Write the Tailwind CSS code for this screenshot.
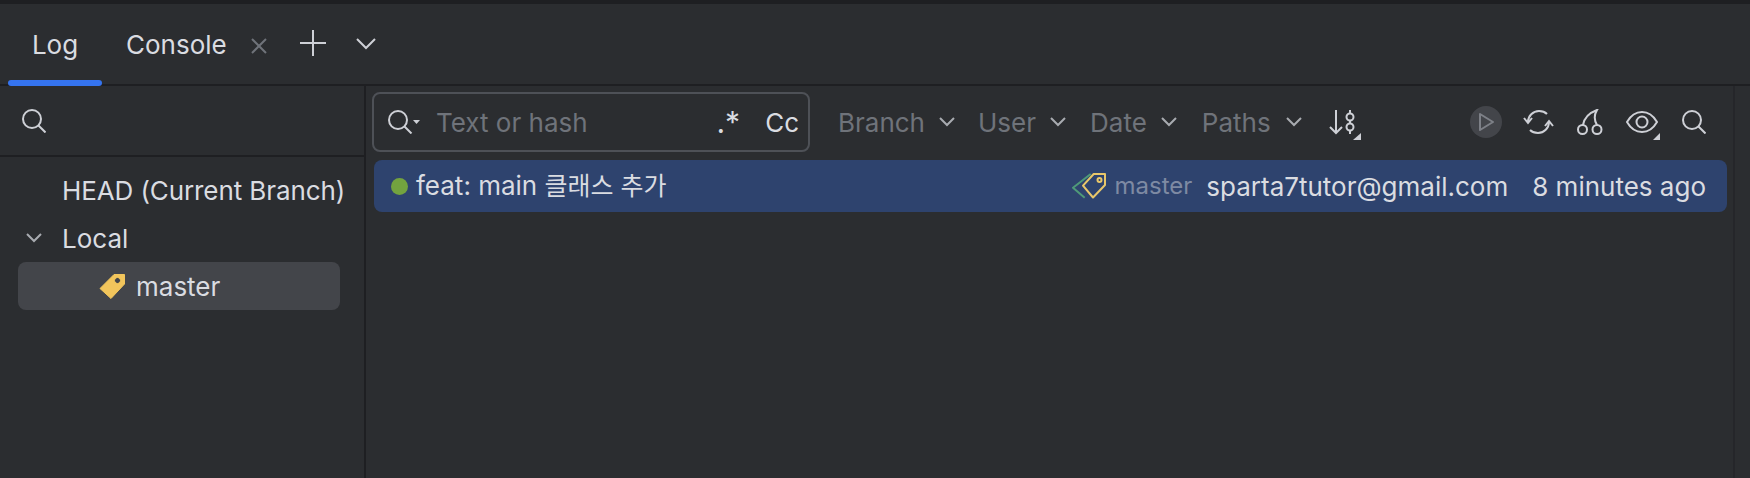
<!DOCTYPE html>
<html lang="en">
<head>
    <meta charset="UTF-8">
    <title>Git Log</title>
    <script src="https://cdn.jsdelivr.net/npm/@tailwindcss/browser@4"></script>
</head>
<body class="bg-[#2b2d30] h-[478px] w-[1750px] overflow-hidden flex flex-col font-['Inter','Noto_Sans_CJK_KR',sans-serif] text-[26px] text-[#dadce1]">
    <!-- Top strip -->
    <div class="h-1 bg-[#1e1f22] shrink-0"></div>

    <!-- Tabs -->
    <header class="h-[82px] shrink-0 flex items-stretch border-b-2 border-[#1e1f22] relative">
        <div class="w-[94px] ml-2 flex justify-center pt-[21px]">Log</div>
        <div class="ml-[24px] pt-[21px]">Console</div>
        <div class="ml-[24px] pt-[34px]">
            <svg width="16" height="16" viewBox="0 0 16 16" fill="none" stroke="#6f737a" stroke-width="2"><path d="M1 1l14 14M15 1L1 15"/></svg>
        </div>
        <div class="ml-[33px] pt-[26px]">
            <svg width="26" height="26" viewBox="0 0 26 26" fill="none" stroke="#ced0d6" stroke-width="2"><path d="M13 0v26M0 13h26"/></svg>
        </div>
        <div class="ml-[30px] pt-[34px]">
            <svg width="20" height="12" viewBox="0 0 20 12" fill="none" stroke="#ced0d6" stroke-width="2"><path d="M1 1l9 9 9-9"/></svg>
        </div>
        <div class="absolute left-2 bottom-[-2px] w-[94px] h-[6px] rounded-full bg-[#3574f0]"></div>
    </header>

    <div class="flex-1 flex min-h-0">
        <!-- Branch tree -->
        <aside class="w-[366px] shrink-0 border-r-2 border-[#1e1f22] flex flex-col">
            <div class="h-[71px] shrink-0 border-b-2 border-[#1e1f22] flex items-center pl-[22px]">
                <svg width="24" height="24" viewBox="0 0 24 24" fill="none" stroke="#ced0d6" stroke-width="2"><circle cx="10" cy="10" r="9"/><path d="M16.500 16.500l7 7"/></svg>
            </div>
            <div class="h-[66px] shrink-0 flex items-center pl-[62px] whitespace-nowrap tracking-[-0.1px]">HEAD (Current Branch)</div>
            <div class="h-[30px] shrink-0 flex items-center">
                <svg class="ml-[26px]" width="16" height="10" viewBox="0 0 16 10" fill="none" stroke="#a8abb0" stroke-width="2"><path d="M1 1l7 7 7-7"/></svg>
                <span class="ml-[20px]">Local</span>
            </div>
            <div class="h-[48px] mt-[9px] ml-[18px] w-[322px] rounded-lg bg-[#43454a] flex items-center pl-[81px]">
                <svg width="27" height="27" viewBox="0 0 27 27"><path fill-rule="evenodd" fill="#f2c55c" stroke="#f2c55c" stroke-linejoin="round" d="M15 1.500h10.500V11L12 25.500 1 15.500zM18.500 4.500a3 3 0 1 0 .01 0z"/></svg>
                <span class="ml-[10px]">master</span>
            </div>
        </aside>

        <main class="flex-1 flex flex-col min-w-0 mr-[15px] border-r-2 border-[#25262a]">
            <!-- Toolbar -->
            <div class="h-[72px] shrink-0 flex items-center pl-[6px]">
                <div class="w-[438px] h-[60px] rounded-lg border-2 border-[#4e5157] flex items-center pl-[14px] pr-[9px]">
                    <svg width="32" height="24" viewBox="0 0 32 24" fill="none" stroke="#ced0d6" stroke-width="2"><circle cx="10" cy="10" r="9"/><path d="M16.500 16.500l7 7"/><path d="M25 10h7l-3.500 4z" fill="#ced0d6" stroke="none"/></svg>
                    <span class="ml-[16px] text-[#6f737a]">Text or hash</span>
                    <span class="ml-auto text-[30px] leading-none">.*</span>
                    <span class="ml-[25px]">Cc</span>
                </div>
                <div class="ml-[28px] flex items-center text-[#6f737a]">
                    <span>Branch</span>
                    <svg class="ml-[14px]" width="16" height="10" viewBox="0 0 16 10" fill="none" stroke="#a8abb0" stroke-width="2"><path d="M1 1l7 7 7-7"/></svg>
                    <span class="ml-[23px]">User</span>
                    <svg class="ml-[14px]" width="16" height="10" viewBox="0 0 16 10" fill="none" stroke="#a8abb0" stroke-width="2"><path d="M1 1l7 7 7-7"/></svg>
                    <span class="ml-[24px]">Date</span>
                    <svg class="ml-[14px]" width="16" height="10" viewBox="0 0 16 10" fill="none" stroke="#a8abb0" stroke-width="2"><path d="M1 1l7 7 7-7"/></svg>
                    <span class="ml-[25px]">Paths</span>
                    <svg class="ml-[15px]" width="16" height="10" viewBox="0 0 16 10" fill="none" stroke="#a8abb0" stroke-width="2"><path d="M1 1l7 7 7-7"/></svg>
                </div>
                <svg class="ml-[27px] mt-[5px]" width="32" height="33" viewBox="0 0 32 33" fill="none" stroke="#ced0d6" stroke-width="2"><path d="M7 2v23M1 19l6 6 6-6"/><path d="M21 2v3.500M21 12.500v3M21 22.500V26"/><circle cx="21" cy="9" r="3.500"/><circle cx="21" cy="19" r="3.500"/><path d="M32 25v7h-8z" fill="#ced0d6" stroke="none"/></svg>
                <div class="ml-auto flex items-center pr-[27px]">
                    <div class="w-8 h-8 rounded-full bg-[#43454a] flex items-center justify-center">
                        <svg width="18" height="20" viewBox="0 0 18 20" fill="none" stroke="#7d8087" stroke-width="2" stroke-linejoin="round"><path d="M3 2l13 8-13 8z"/></svg>
                    </div>
                    <svg class="ml-[21px]" width="31" height="26" viewBox="0 0 31 26" fill="none" stroke="#ced0d6" stroke-width="2"><path d="M5 13c0-6 5-11 11-11 3 0 6 1 8 3M26 13c0 6-5 11-11 11-3 0-6-1-8-3"/><path d="M1 9l4 5 4-5M22 17l4-5 4 5"/></svg>
                    <svg class="ml-[23px]" width="26" height="26" viewBox="0 0 26 26" fill="none" stroke="#ced0d6" stroke-width="2"><circle cx="5.500" cy="20.500" r="4.500"/><circle cx="20" cy="20.500" r="4.500"/><path d="M6 16C7 10 12 4 20 1c-3 5-3 10 0 15"/></svg>
                    <svg class="ml-[23px] mt-[6px]" width="34" height="30" viewBox="0 0 34 30" fill="none" stroke="#ced0d6" stroke-width="2"><path d="M1 12C5 5 10 2 16 2s11 3 15 10c-4 7-9 10-15 10S5 19 1 12z"/><circle cx="16" cy="12" r="5.500"/><path d="M34 23v7h-7z" fill="#ced0d6" stroke="none"/></svg>
                    <svg class="ml-[22px]" width="24" height="24" viewBox="0 0 24 24" fill="none" stroke="#ced0d6" stroke-width="2"><circle cx="10" cy="10" r="9"/><path d="M16.500 16.500l7 7"/></svg>
                </div>
            </div>

            <!-- Commit row -->
            <div class="mt-[2px] ml-2 mr-[6px] h-[52px] rounded-lg bg-[#2e436e] flex items-center pl-[17px] pr-[21px] whitespace-nowrap">
                <div class="w-[17px] h-[17px] rounded-full bg-[#73a33f]"></div>
                <span class="ml-[8px]">feat: main <span class="text-[25px]">클래스 추가</span></span>
                <svg class="ml-auto" width="34" height="26" viewBox="0 0 34 26" fill="none" stroke-width="2" stroke-linejoin="round"><path d="M18.700 1L1 14.700l11.700 10" stroke="#4f9a78"/><path d="M21.700 1H33v11L21 24.500 11 12.700z" stroke="#e9c76a"/><circle cx="27.500" cy="7" r="2" stroke="#e9c76a"/></svg>
                <span class="ml-[9px] text-[24px] text-[#7e8aa3]">master</span>
                <span class="ml-[14px]">sparta7tutor@gmail.com</span>
                <span class="ml-[24px]">8 minutes ago</span>
            </div>
        </main>
    </div>
</body>
</html>
